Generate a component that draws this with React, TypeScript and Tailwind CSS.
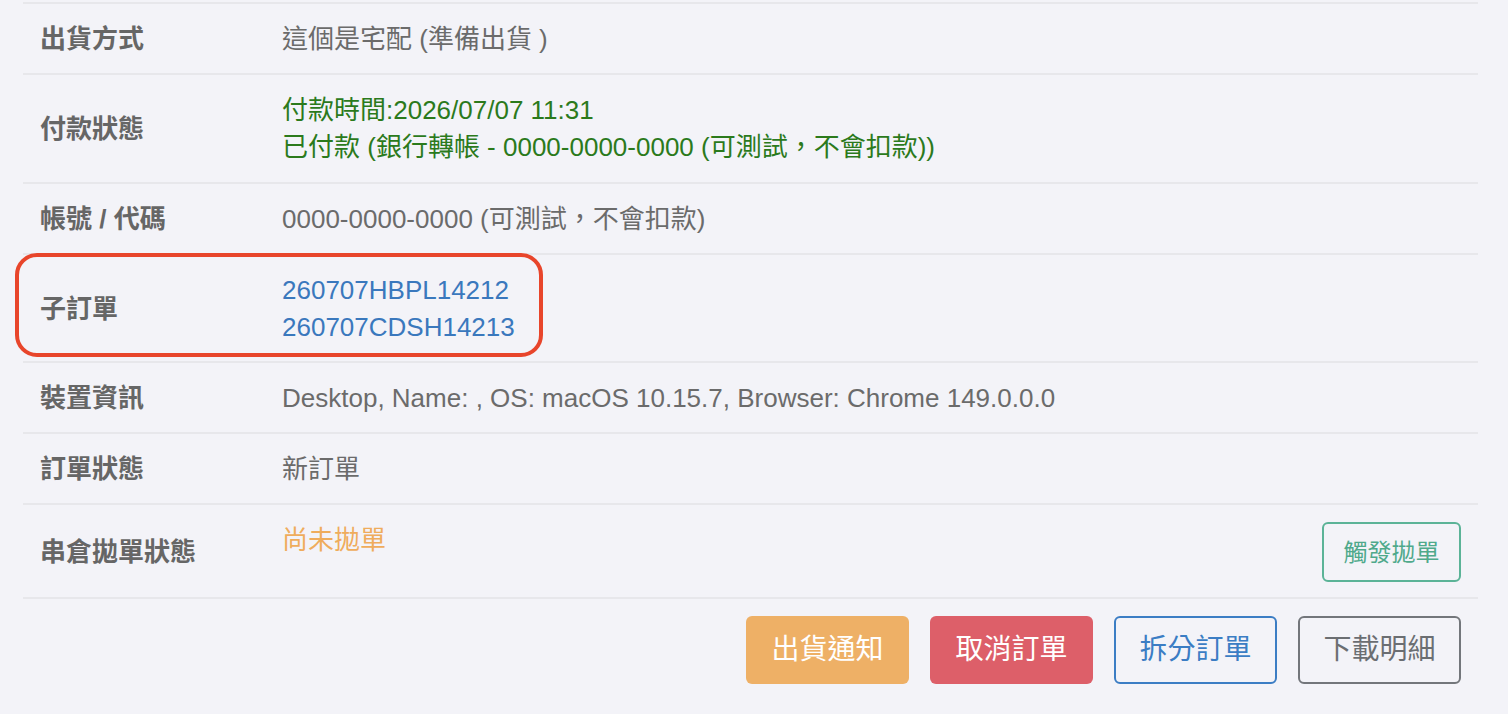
import React from "react";

const font = '"Liberation Sans", "Noto Sans CJK TC", sans-serif';

function Row({label, children}: {label: string; children: React.ReactNode}) {
  return (
    <div className="flex border-b-2 border-[#e7e7eb]">
      <div className="w-[242px] shrink-0 px-[17px] pt-[17px] pb-[15px] flex items-center text-[26px] leading-[37px] font-bold text-[#666]">
        {label}
      </div>
      <div className="flex-1 px-[17px] pt-[17px] pb-[15px] text-[26px] leading-[37px] text-[#6b6b6b]">{children}</div>
    </div>
  );
}

export default function App() {
  return (
    <div className="w-[1508px] h-[714px] bg-[#f3f3f8] overflow-hidden" style={{fontFamily: font}}>
      <div className="relative mx-[23px] w-[1455px] pt-[2px]">
        <div className="border-t-2 border-[#e7e7eb]" />
        <Row label="出貨方式">這個是宅配 (準備出貨 )</Row>
        <Row label="付款狀態">
          <div className="text-[#2b7a1c] pb-[1px]">
            <div>付款時間:2026/07/07 11:31</div>
            <div>已付款 (銀行轉帳 - 0000-0000-0000 (可測試，不會扣款))</div>
          </div>
        </Row>
        <Row label="帳號 / 代碼">0000-0000-0000 (可測試，不會扣款)</Row>
        <Row label="子訂單">
          <div className="text-[#3a78bd]">
            <div>260707HBPL14212</div>
            <div>260707CDSH14213</div>
          </div>
        </Row>
        <Row label="裝置資訊">Desktop, Name: , OS: macOS 10.15.7, Browser: Chrome 149.0.0.0</Row>
        <Row label="訂單狀態">新訂單</Row>
        <Row label="串倉拋單狀態">
          <div className="flex items-start justify-between">
            <span className="text-[#efac5c]">尚未拋單</span>
            <button className="h-[60px] w-[139px] rounded-[6px] border-2 border-[#5bb397] text-[24px] text-[#4fa98b]">
              觸發拋單
            </button>
          </div>
        </Row>
        <div className="flex justify-end gap-[21px] pt-[17px] pr-[17px]">
          <button className="h-[68px] w-[163px] rounded-[6px] bg-[#eeb066] text-[28px] text-white">出貨通知</button>
          <button className="h-[68px] w-[163px] rounded-[6px] bg-[#dd5f69] text-[28px] text-white">取消訂單</button>
          <button className="h-[68px] w-[163px] rounded-[6px] border-2 border-[#3b7dc4] text-[28px] text-[#3b7dc4]">拆分訂單</button>
          <button className="h-[68px] w-[163px] rounded-[6px] border-2 border-[#73767b] text-[28px] text-[#6b6e72]">下載明細</button>
        </div>
        <div className="absolute left-[-8px] top-[253px] w-[528px] h-[104px] rounded-[22px] border-4 border-[#e8452b] pointer-events-none" />
      </div>
    </div>
  );
}
